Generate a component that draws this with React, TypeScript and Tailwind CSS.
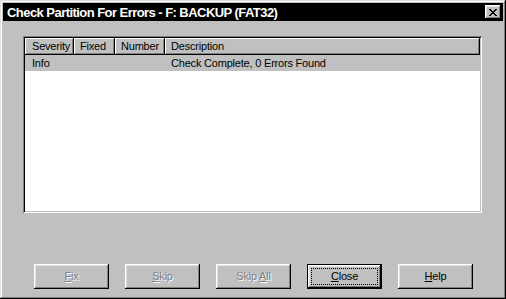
const raised =
  "shadow-[inset_-1px_-1px_0_#000,inset_1px_1px_0_#fff,inset_-2px_-2px_0_#808080,inset_2px_2px_0_#dfdfdf]";

function Btn({ label, u, disabled, isDefault }: { label: string; u: number; disabled?: boolean; isDefault?: boolean }) {
  const txt = (
    <span>
      {label.slice(0, u)}
      <span className="underline underline-offset-[1px]">{label[u]}</span>
      {label.slice(u + 1)}
    </span>
  );
  if (isDefault) {
    return (
      <div className="w-[75px] h-[25px] border border-black bg-[#c0c0c0]">
        <div className={`w-full h-full p-[3px] ${raised}`}>
          <div className="w-full h-full border border-dotted border-black flex items-center justify-center text-black">
            {txt}
          </div>
        </div>
      </div>
    );
  }
  return (
    <div
      className={`w-[75px] h-[25px] bg-[#c0c0c0] flex items-center justify-center ${raised} ${
        disabled ? "text-[#808080] [text-shadow:1px_1px_0_#fff]" : "text-black"
      }`}
    >
      {txt}
    </div>
  );
}

const head = "shadow-[inset_-1px_-1px_0_#000,inset_1px_1px_0_#fff,inset_-2px_-2px_0_#808080]";

export default function App() {
  return (
    <div
      className="w-[506px] h-[299px] bg-[#c0c0c0] p-[3px] flex flex-col shadow-[inset_-1px_-1px_0_#000,inset_1px_1px_0_#dfdfdf,inset_-2px_-2px_0_#808080,inset_2px_2px_0_#fff] text-[11px] tracking-[-0.2px]"
      style={{ fontFamily: '"Liberation Sans", Arial, sans-serif' }}
    >
      {/* title bar */}
      <div className="h-[18px] bg-black flex items-center pl-[4px] pr-[2px] shrink-0">
        <span className="text-white font-bold text-[13px] tracking-[-0.55px] flex-1 leading-none">
          Check Partition For Errors - F: BACKUP (FAT32)
        </span>
        <div className={`w-[16px] h-[14px] bg-[#c0c0c0] flex items-center justify-center ${raised}`}>
          <svg width="8" height="7" viewBox="0 0 8 7" shapeRendering="crispEdges">
            <path
              d="M0 0h2v1h-2zM6 0h2v1h-2zM1 1h2v1h-2zM5 1h2v1h-2zM2 2h4v1h-4zM3 3h2v1h-2zM2 4h4v1h-4zM1 5h2v1h-2zM5 5h2v1h-2zM0 6h2v1h-2zM6 6h2v1h-2z"
              fill="#000"
            />
          </svg>
        </div>
      </div>

      {/* list view */}
      <div className="ml-[20px] mt-[15px] w-[459px] h-[177px] p-[2px] bg-white shadow-[inset_1px_1px_0_#808080,inset_-1px_-1px_0_#fff,inset_2px_2px_0_#000,inset_-2px_-2px_0_#c0c0c0]">
        <div className="flex h-[17px] bg-[#c0c0c0] text-black">
          <div className={`w-[49px] pl-[7px] flex items-center ${head}`}>Severity</div>
          <div className={`w-[41px] pl-[6px] flex items-center ${head}`}>Fixed</div>
          <div className={`w-[50px] pl-[6px] flex items-center ${head}`}>Number</div>
          <div className={`flex-1 pl-[6px] flex items-center ${head}`}>Description</div>
        </div>
        <div className="flex h-[16px] bg-[#c0c0c0] text-black items-center">
          <div className="w-[140px] pl-[7px]">Info</div>
          <div className="flex-1 pl-[6px]">Check Complete, 0 Errors Found</div>
        </div>
      </div>

      {/* buttons */}
      <div className="flex gap-[16px] ml-[31px] mt-[51px]">
        <Btn label="Fix" u={0} disabled />
        <Btn label="Skip" u={0} disabled />
        <Btn label="Skip All" u={5} disabled />
        <Btn label="Close" u={0} isDefault />
        <Btn label="Help" u={0} />
      </div>
    </div>
  );
}
